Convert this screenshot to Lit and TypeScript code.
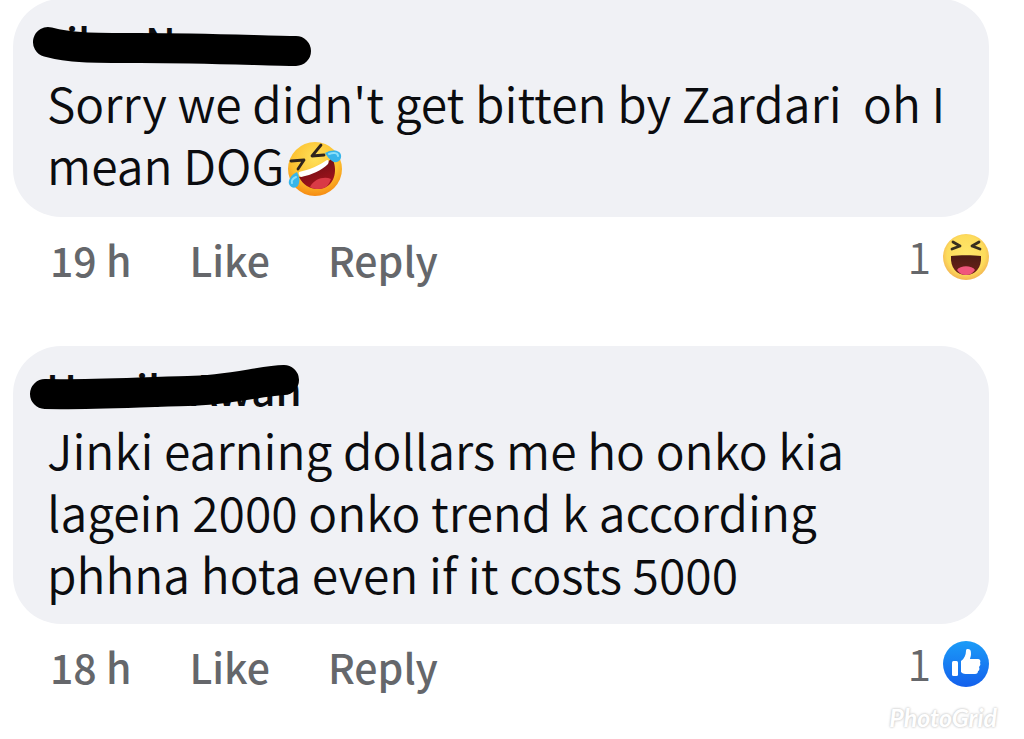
import { LitElement, html, css, svg } from 'lit';
import { customElement, property } from 'lit/decorators.js';

const rofl = html`<svg class="emoji" viewBox="0 0 56 56" role="img" aria-label="Rolling on the floor laughing">
  <defs>
    <radialGradient id="face" cx=".5" cy=".3" r=".75">
      <stop offset="0" stop-color="#ffe15a" /><stop offset=".6" stop-color="#fcc02f" /><stop offset="1" stop-color="#f5800c" />
    </radialGradient>
    <linearGradient id="mouth" x1="0" y1="0" x2=".4" y2="1">
      <stop offset="0" stop-color="#5d0d12" /><stop offset="1" stop-color="#a3131c" />
    </linearGradient>
  </defs>
  <circle cx="28" cy="28" r="27" fill="url(#face)" />
  <path d="M12 36C24 34 38 24 45 17C51 28 48 43 37 47C27 50 17 46 12 36Z" fill="url(#mouth)" />
  <path d="M23 46C27 38 37 35 44 38C42 43 40 46 37 47C32 48.500 28 48.500 23 46Z" fill="#d93a46" />
  <path d="M12 31C22 29 33 24 40 19C42 19 42 21 41 23C35 29 25 34 14 36C12 35 11 32 12 31Z" fill="#fff" />
  <path d="M4 20L17 19L11 28M34 4L25 15L37 14" fill="none" stroke="#30251d" stroke-width="2.800" stroke-linecap="round" stroke-linejoin="round" />
  <path d="M10 31C4 34 1 39 2 43C4 48 11 48 12 42C13 39 12 35 10 31Z" fill="#38b5ea" />
  <path d="M38 12C45 8 53 9 54 14C55 20 49 23 45 20C42 18 40 15 38 12Z" fill="#38b5ea" />
  <path d="M42 13C47 11 51 12 51 15M9 36C6 37 4 40 5 42" fill="none" stroke="#8be0fa" stroke-width="2" stroke-linecap="round" />
</svg>`;

const haha = html`<svg class="reaction" viewBox="0 0 46 46" role="img" aria-label="Haha">
  <defs>
    <radialGradient id="haha" cx=".5" cy=".45" r=".55">
      <stop offset="0" stop-color="#ffe76a" /><stop offset=".75" stop-color="#fddc5c" /><stop offset="1" stop-color="#f3b552" />
    </radialGradient>
    <linearGradient id="hahaMouth" x1="0" y1="0" x2="0" y2="1">
      <stop offset="0" stop-color="#4b1c14" /><stop offset="1" stop-color="#6f2018" />
    </linearGradient>
  </defs>
  <circle cx="23" cy="23" r="23" fill="url(#haha)" />
  <path d="M8 22C15 21 31 21 38 22C39 34 32 41 23 41C14 41 7 34 8 22Z" fill="url(#hahaMouth)" />
  <path d="M14 36C17 31 29 31 32 36C30 39 27 41 23 41C19 41 16 39 14 36Z" fill="#f0567c" />
  <path d="M10 8L17 12L9 15M36 8L29 12L37 15" fill="none" stroke="#382f1f" stroke-width="2.800" stroke-linecap="round" stroke-linejoin="round" />
</svg>`;

const thumb = html`<svg class="reaction" viewBox="0 0 46 46" role="img" aria-label="Like">
  <defs>
    <linearGradient id="blue" x1="0" y1="0" x2="0" y2="1">
      <stop offset="0" stop-color="#1b9cf8" /><stop offset="1" stop-color="#1460ec" />
    </linearGradient>
  </defs>
  <circle cx="23" cy="23" r="23" fill="url(#blue)" />
  <rect x="9" y="20" width="6" height="15" rx="1.500" fill="#fff" />
  <path d="M18 20C21 18 23 14 23 10C23 8 24 8 25 8C28 8 28 11 28 13C28 15 27 17 27 18H35C37 18 38 20 37 22C38 23 37 25 36 26C37 28 36 30 35 30C35 32 34 33 32 33H24C22 33 20 33 18 31Z" fill="#fff" />
</svg>`;

const firstScribble = html`<svg class="scribble" viewBox="0 0 300 56" role="img" aria-label="Name hidden">
  ${svg`<text x="36" y="44">il</text><text x="115" y="44">N</text>`}
  <path d="M18 27C40 33 60 33 110 33C180 33 240 36 266 36" />
</svg>`;

const secondScribble = html`<svg class="scribble" viewBox="0 0 300 56" role="img" aria-label="Name hidden">
  ${svg`<text x="16" y="44">H</text><text x="106" y="44">il</text><text x="161" y="44">Awan</text>`}
  <path d="M15 32C60 33 110 30 158 29C200 28 230 19 254 18" />
</svg>`;

@customElement('comment-item')
class CommentItem extends LitElement {
  @property() age = '';
  @property({ attribute: false }) name: unknown;
  @property({ attribute: false }) text: unknown;
  @property({ attribute: false }) reaction: unknown;

  static styles = css`
    :host { display: block; }
    .bubble {
      padding: 16px 36px 20px 34px;
      border-radius: 48px;
      background: #f0f1f5;
      color: #0b0c0f;
    }
    .scribble {
      display: block;
      width: 300px;
      height: 56px;
      margin-left: -17px;
      overflow: visible;
    }
    .scribble text { font-size: 42px; font-weight: 500; fill: #0b0c0f; }
    .scribble path { fill: none; stroke: #000; stroke-width: 30px; stroke-linecap: round; }
    .text {
      margin: 0;
      font-size: 48px;
      font-weight: 350;
      line-height: 62px;
      white-space: pre-wrap;
    }
    .emoji { width: 56px; height: 56px; margin-left: 3px; vertical-align: -12px; }
    .actions {
      display: flex;
      align-items: center;
      gap: 58px;
      height: 84px;
      padding: 0 0 8px 37px;
      font-size: 41px;
      font-weight: 500;
      line-height: 60px;
      color: #65676b;
    }
    button {
      padding: 0;
      border: 0;
      background: none;
      color: inherit;
      font: inherit;
      cursor: pointer;
    }
    .count {
      display: flex;
      align-items: center;
      gap: 12px;
      margin-left: auto;
      font-size: 43px;
      font-weight: 350;
    }
    .count span { margin-bottom: 8px; }
    .reaction { display: block; width: 46px; height: 46px; margin-bottom: 4px; }
  `;

  render() {
    return html`<article>
      <div class="bubble">${this.name}<p class="text">${this.text}</p></div>
      <div class="actions">
        <time>${this.age}</time>
        <button type="button">Like</button>
        <button type="button">Reply</button>
        <button type="button" class="count"><span>1</span>${this.reaction}</button>
      </div>
    </article>`;
  }
}

@customElement('app-root')
class AppRoot extends LitElement {
  static styles = css`
    :host {
      display: block;
      background: #fff;
      font-family: 'Noto Sans CJK SC', 'Noto Sans', sans-serif;
    }
    main {
      display: flex;
      flex-direction: column;
      gap: 37px;
      margin-top: -1px;
      padding: 0 35px 0 13px;
    }
    footer {
      padding-right: 27px;
      text-align: right;
      font-family: Lato, sans-serif;
      font-size: 25px;
      font-style: italic;
      font-weight: 700;
      line-height: 24px;
      margin-top: -11px;
      color: #fff;
      text-shadow: 0 0 2px #ccc, 0 0 3px #ccc;
    }
  `;

  render() {
    return html`<main>
        <comment-item age="19 h" .name=${firstScribble} .reaction=${haha}
          .text=${html`Sorry we didn't get bitten by Zardari  oh I mean DOG${rofl}`}></comment-item>
        <comment-item age="18 h" .name=${secondScribble} .reaction=${thumb}
          .text=${'Jinki earning dollars me ho onko kia lagein 2000 onko trend k according phhna hota even if it costs 5000'}></comment-item>
      </main>
      <footer>PhotoGrid</footer>`;
  }
}
